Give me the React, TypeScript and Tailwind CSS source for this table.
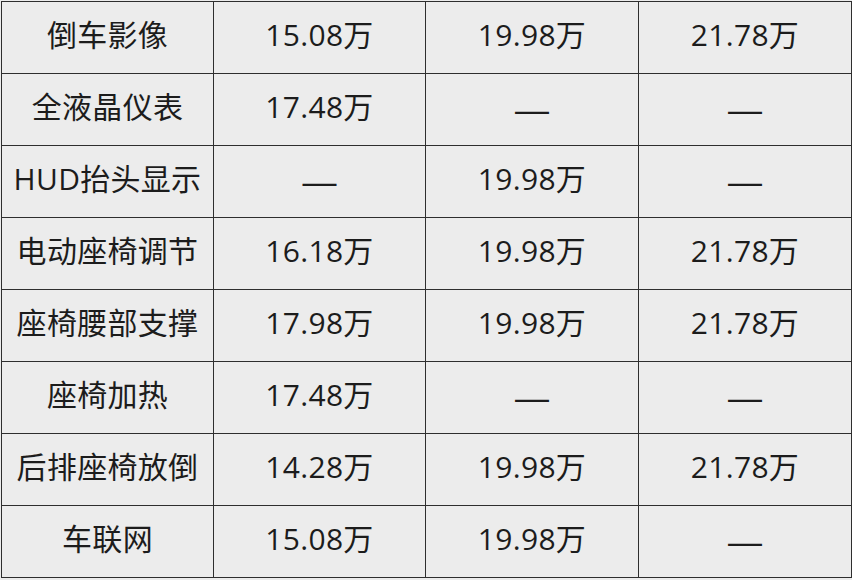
import React from "react";

const rows: [string, string, string, string][] = [
  ["倒车影像", "15.08万", "19.98万", "21.78万"],
  ["全液晶仪表", "17.48万", "—", "—"],
  ["HUD抬头显示", "—", "19.98万", "—"],
  ["电动座椅调节", "16.18万", "19.98万", "21.78万"],
  ["座椅腰部支撑", "17.98万", "19.98万", "21.78万"],
  ["座椅加热", "17.48万", "—", "—"],
  ["后排座椅放倒", "14.28万", "19.98万", "21.78万"],
  ["车联网", "15.08万", "19.98万", "—"],
];

export default function App() {
  return (
    <div className="w-[852px] h-[580px] bg-[#ececec] overflow-hidden pt-px pl-px">
      <div
        className="grid grid-cols-[212px_212px_213px_213px] border-l border-t border-[#2e2e2e] text-[30px] text-[#1c1c1c]"
        style={{ fontFamily: '"Open Sans", "Noto Sans CJK SC", sans-serif' }}
      >
        {rows.map((r, i) =>
          r.map((c, j) => (
            <div
              key={`${i}-${j}`}
              className="h-[72px] flex items-center justify-center border-r border-b border-[#2e2e2e] whitespace-nowrap leading-none"
            >
              {c === "—" ? (
                <span
                  className="block text-[34px] pb-[2px]"
                  style={{ fontFamily: '"Liberation Sans", sans-serif' }}
                >
                  —
                </span>
              ) : (
                <span className="block pb-[5px] tracking-[0.3px]">{c}</span>
              )}
            </div>
          ))
        )}
      </div>
    </div>
  );
}
